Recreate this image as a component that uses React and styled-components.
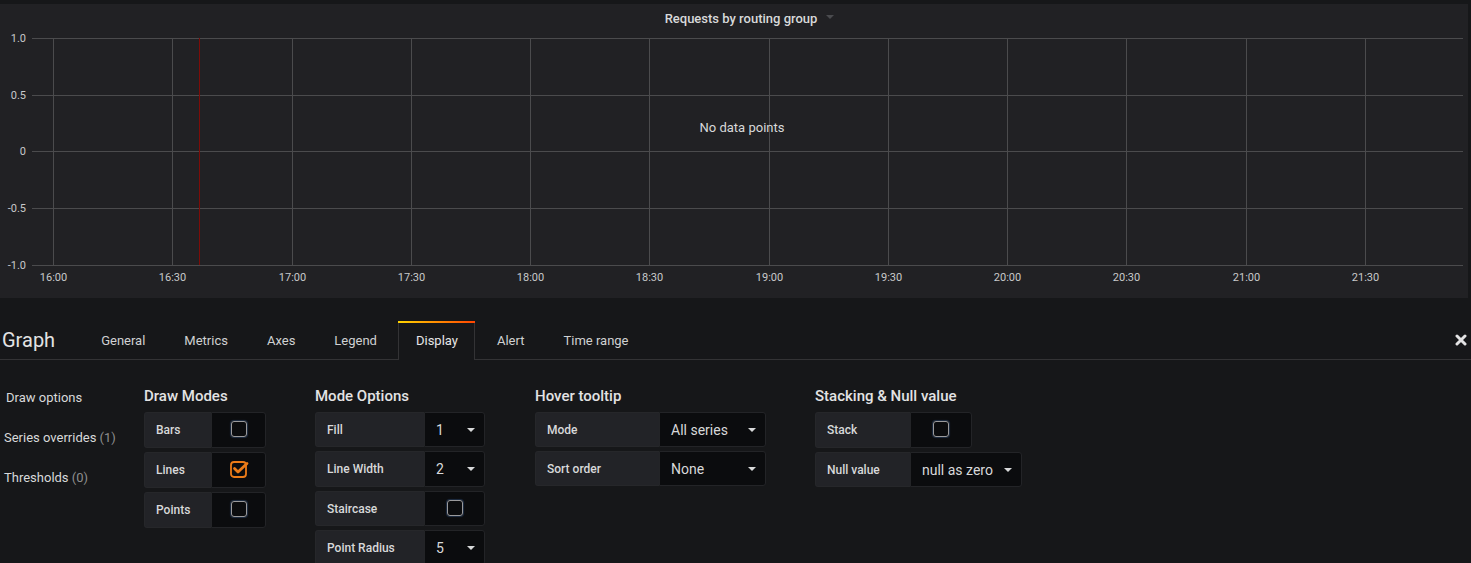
import React from "react";
import styled, { createGlobalStyle } from "styled-components";

const GlobalStyle = createGlobalStyle`
  html, body { margin: 0; padding: 0; background: #161719; }
  body { font-family: Roboto, "Liberation Sans", sans-serif; color: #d8d9da; }
  * { box-sizing: border-box; }
`;

const Page = styled.div`
  width: 1471px;
  height: 563px;
  overflow: hidden;
  background: #161719;
`;

const PanelWrap = styled.div`
  padding: 4px 3px 0 0;
`;

const GraphPanel = styled.div`
  height: 294px;
  background: #212124;
  display: flex;
  flex-direction: column;
`;

const PanelHeader = styled.div`
  height: 28px;
  display: flex;
  align-items: center;
  justify-content: center;
`;

const PanelTitle = styled.span`
  font-size: 13px;
  font-weight: 500;
  color: #d8d9da;
  display: inline-flex;
  align-items: center;
  gap: 9px;
  padding-left: 31px;
`;

const TitleCaret = styled.span`
  width: 0;
  height: 0;
  border-left: 4px solid transparent;
  border-right: 4px solid transparent;
  border-top: 4px solid #4a4b4e;
  margin-top: -2px;
`;

const ChartSvg = styled.svg`
  display: block;
  font-family: Roboto, "Liberation Sans", sans-serif;
`;

const Editor = styled.div``;

const TabBar = styled.div`
  height: 62px;
  display: flex;
  align-items: flex-end;
  border-bottom: 1px solid #333335;
`;

const EditorTitle = styled.div`
  font-size: 20px;
  line-height: 37px;
  padding-left: 2px;
  margin-right: 28px;
  color: #e3e3e4;
`;

const Tabs = styled.div`
  display: flex;
  align-items: flex-end;
  margin-bottom: -1px;
`;

const Tab = styled.div`
  height: 39px;
  padding: 0 16px 0 17px;
  margin-right: 4px;
  font-size: 13px;
  line-height: 39px;
  color: ${(p) => (p.$active ? "#e6e6e7" : "#d0d1d2")};
  position: relative;
  border-left: 1px solid ${(p) => (p.$active ? "#333335" : "transparent")};
  border-right: 1px solid ${(p) => (p.$active ? "#333335" : "transparent")};
  background: ${(p) => (p.$active ? "#161719" : "transparent")};
  ${(p) =>
    p.$active &&
    `&::before {
      content: "";
      position: absolute;
      left: -1px;
      right: -1px;
      top: 0;
      height: 2px;
      background: linear-gradient(90deg, #ffd500 0%, #ff4400 100%);
    }`}
`;

const CloseBtn = styled.div`
  margin-left: auto;
  height: 39px;
  padding-right: 4px;
  display: flex;
  align-items: center;
`;

const EditorBody = styled.div`
  display: flex;
  align-items: flex-start;
`;

const SideNav = styled.div`
  width: 144px;
  padding-top: 17px;
  display: flex;
  flex-direction: column;
`;

const NavItem = styled.div`
  height: 40px;
  line-height: 41px;
  font-size: 13px;
  color: #d8d9da;
  padding-left: ${(p) => (p.$active ? "6px" : "4px")};
`;

const NavCount = styled.span`
  color: #8e8e8e;
`;

const Section = styled.div`
  padding-top: 26px;
  margin-right: ${(p) => p.$mr ?? 49}px;
`;

const SectionTitle = styled.div`
  font-size: 15px;
  font-weight: 500;
  line-height: 20px;
  margin-bottom: 6px;
  color: #e3e3e4;
`;

const Row = styled.div`
  display: flex;
  height: ${(p) => (p.$tall ? 36 : 35)}px;
  margin-bottom: 4px;
`;

const Label = styled.div`
  width: ${(p) => p.$w}px;
  background: #222327;
  border: 1px solid #26272a;
  border-right: none;
  border-radius: 3px 0 0 3px;
  padding-left: 11px;
  display: flex;
  align-items: center;
  font-size: 12px;
  font-weight: 500;
  color: #d8d9da;
`;

const Value = styled.div`
  width: ${(p) => p.$w}px;
  background: #0b0c0e;
  border: 1px solid #232427;
  border-radius: 0 3px 3px 0;
  display: flex;
  align-items: center;
  justify-content: ${(p) => (p.$center ? "center" : "space-between")};
  padding: ${(p) => (p.$center ? "0" : "0 9px 0 11px")};
  font-size: 14px;
  color: #d8d9da;
`;

const Caret = styled.span`
  width: 0;
  height: 0;
  border-left: 4px solid transparent;
  border-right: 4px solid transparent;
  border-top: 4px solid #d8d9da;
`;

const Box = styled.span`
  width: 16px;
  height: 16px;
  border: 1.5px solid #9a9a9c;
  border-radius: 3px;
  box-shadow: 0 0 1px 1px rgba(70, 110, 170, 0.35);
  margin-top: -2px;
`;

function Checkbox({ checked }) {
  if (!checked) return <Box />;
  return (
    <svg width="20" height="20" viewBox="0 0 20 20" style={{ marginTop: -2 }}>
      <rect x="2" y="3" width="15" height="15" rx="3" fill="none" stroke="#eb7b18" strokeWidth="1.8" />
      <path d="M5.5 9.5 L9 13 L18 4.5" fill="none" stroke="#eb7b18" strokeWidth="2.8" strokeLinecap="round" strokeLinejoin="round" />
    </svg>
  );
}

function Select({ w, value }) {
  return (
    <Value $w={w}>
      <span>{value}</span>
      <Caret />
    </Value>
  );
}

function Chart() {
  const W = 1468;
  const H = 266;
  const ys = [
    ["1.0", 6],
    ["0.5", 62.5],
    ["0", 119],
    ["-0.5", 176],
    ["-1.0", 233],
  ];
  const times = ["16:00", "16:30", "17:00", "17:30", "18:00", "18:30", "19:00", "19:30", "20:00", "20:30", "21:00", "21:30"];
  const step = 119.27;
  return (
    <ChartSvg width={W} height={H}>
      {ys.map(([l, y]) => (
        <g key={l}>
          <line x1="32" x2="1463" y1={Math.round(y) + 0.5} y2={Math.round(y) + 0.5} stroke="#4b4b4d" strokeWidth="1" />
          <text x="26" y={y + 4} textAnchor="end" fontSize="11" fill="#c8c9ca">{l}</text>
        </g>
      ))}
      {times.map((t, i) => {
        const x = Math.round(53 + i * step) + 0.5;
        return (
          <g key={t}>
            <line x1={x} x2={x} y1="6" y2="233" stroke="#4b4b4d" strokeWidth="1" />
            <text x={x} y="249" textAnchor="middle" fontSize="11" fill="#c8c9ca">{t}</text>
          </g>
        );
      })}
      <line x1="199.5" x2="199.5" y1="6" y2="233" stroke="#7d0c08" strokeWidth="1" />
      <text x="742" y="100" textAnchor="middle" fontSize="13" fill="#d8d9da">No data points</text>
    </ChartSvg>
  );
}

const tabs = ["General", "Metrics", "Axes", "Legend", "Display", "Alert", "Time range"];

export default function App() {
  return (
    <Page>
      <GlobalStyle />
      <PanelWrap>
        <GraphPanel>
          <PanelHeader>
            <PanelTitle>
              Requests by routing group
              <TitleCaret />
            </PanelTitle>
          </PanelHeader>
          <Chart />
        </GraphPanel>
      </PanelWrap>
      <Editor>
        <TabBar>
          <EditorTitle>Graph</EditorTitle>
          <Tabs>
            {tabs.map((t) => (
              <Tab key={t} $active={t === "Display"}>{t}</Tab>
            ))}
          </Tabs>
          <CloseBtn>
            <svg width="12" height="12" viewBox="0 0 12 12">
              <path d="M2 2 L10 10 M10 2 L2 10" stroke="#e3e3e4" strokeWidth="3" strokeLinecap="round" />
            </svg>
          </CloseBtn>
        </TabBar>
        <EditorBody>
          <SideNav>
            <NavItem $active>Draw options</NavItem>
            <NavItem>Series overrides <NavCount>(1)</NavCount></NavItem>
            <NavItem>Thresholds <NavCount>(0)</NavCount></NavItem>
          </SideNav>
          <Section>
            <SectionTitle>Draw Modes</SectionTitle>
            <Row $tall><Label $w={67}>Bars</Label><Value $w={55} $center><Checkbox /></Value></Row>
            <Row $tall><Label $w={67}>Lines</Label><Value $w={55} $center><Checkbox checked /></Value></Row>
            <Row $tall><Label $w={67}>Points</Label><Value $w={55} $center><Checkbox /></Value></Row>
          </Section>
          <Section $mr={50}>
            <SectionTitle>Mode Options</SectionTitle>
            <Row><Label $w={109}>Fill</Label><Select w={61} value="1" /></Row>
            <Row $tall><Label $w={109}>Line Width</Label><Select w={61} value="2" /></Row>
            <Row><Label $w={109}>Staircase</Label><Value $w={61} $center><Checkbox /></Value></Row>
            <Row><Label $w={109}>Point Radius</Label><Select w={61} value="5" /></Row>
          </Section>
          <Section>
            <SectionTitle>Hover tooltip</SectionTitle>
            <Row><Label $w={124}>Mode</Label><Select w={107} value="All series" /></Row>
            <Row><Label $w={124}>Sort order</Label><Select w={107} value="None" /></Row>
          </Section>
          <Section>
            <SectionTitle>Stacking &amp; Null value</SectionTitle>
            <Row $tall><Label $w={95}>Stack</Label><Value $w={62} $center><Checkbox /></Value></Row>
            <Row><Label $w={95}>Null value</Label><Select w={112} value="null as zero" /></Row>
          </Section>
        </EditorBody>
      </Editor>
    </Page>
  );
}
